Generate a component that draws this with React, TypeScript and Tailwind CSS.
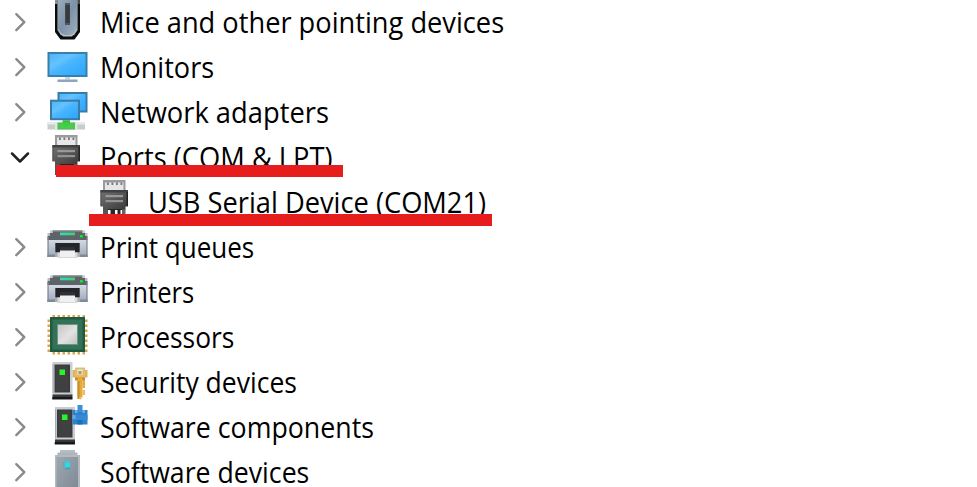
import type { ReactNode } from "react";

type Box = [number, number, number, number, string];

function Boxes({ items }: { items: Box[] }) {
  return (
    <>
      {items.map(([x, y, w, h, fill], i) => (
        <rect key={i} x={x} y={y} width={w} height={h} fill={fill} />
      ))}
    </>
  );
}

function Icon({ children }: { children: ReactNode }) {
  return (
    <svg viewBox="-0.5 0 41 40" className="block h-10 w-[41px] shrink-0 overflow-hidden">
      {children}
    </svg>
  );
}

function MouseIcon() {
  return (
    <Icon>
      <defs>
        <linearGradient id="mouse" x1="0" y1="0" x2="1" y2="1">
          <stop offset="0" stopColor="#9badbd" />
          <stop offset="0.5" stopColor="#7c92a8" />
          <stop offset="1" stopColor="#9fb0c0" />
        </linearGradient>
      </defs>
      <path d="M7.500 0H32.500V32L30 35.500L27 39.500H13L10 35.500L7.500 32Z" fill="#0c0c0c" />
      <Boxes
        items={[
          [7.5, 0, 2.5, 4, "#8c8c8c"],
          [30, 0, 2.5, 4, "#4a4a4a"],
        ]}
      />
      <path d="M10 0H30V30L27 34.500L24 36.500H16L13 34.500L10 30Z" fill="#b9c3cc" />
      <path d="M10.500 0H29.500V29L26 33.500L23 35H17L14 33.500L10.500 29Z" fill="url(#mouse)" />
      <rect x="17.500" y="3" width="5" height="22" fill="#505862" />
      <rect x="18" y="5" width="4.300" height="18" fill="#383a3d" />
    </Icon>
  );
}

function ScreenGradient({ id }: { id: string }) {
  return (
    <linearGradient id={id} x1="0" y1="0" x2="1" y2="1">
      <stop offset="0" stopColor="#4bb5fc" />
      <stop offset="0.32" stopColor="#66c2ff" />
      <stop offset="0.5" stopColor="#48b5ff" />
      <stop offset="1" stopColor="#2ba6fb" />
    </linearGradient>
  );
}

function MonitorIcon() {
  return (
    <Icon>
      <defs>
        <ScreenGradient id="screen" />
      </defs>
      <rect x="0" y="7" width="40" height="25" fill="#397fa6" />
      <rect x="2" y="9" width="36" height="21" fill="url(#screen)" />
      <rect x="17.500" y="32" width="5" height="2.500" fill="#cbd5e2" />
      <rect x="10" y="34.500" width="20" height="2.500" fill="#8fa4be" />
    </Icon>
  );
}

function NetworkIcon() {
  return (
    <Icon>
      <defs>
        <ScreenGradient id="netscreen" />
      </defs>
      <rect x="10" y="2" width="30" height="20.500" fill="#387ba5" />
      <rect x="12" y="4" width="26" height="16.500" fill="url(#netscreen)" />
      <rect x="2.500" y="9.700" width="30" height="20.500" fill="#387ba5" />
      <rect x="4.500" y="11.700" width="26" height="16.500" fill="url(#netscreen)" />
      <Boxes
        items={[
          [0, 32, 37.5, 7.5, "#c9cccd"],
          [0, 32, 37.5, 2.5, "#e9eaeb"],
          [7.5, 32, 2.5, 7.5, "#d8edd9"],
          [27.5, 32, 2.5, 7.5, "#d8edd9"],
          [15, 30.2, 7.5, 4.3, "#41b746"],
          [10, 32.5, 17.5, 7, "#55bd59"],
          [12.5, 35, 12.5, 3, "#3fd547"],
          [17.5, 32, 2.5, 5, "#37d141"],
        ]}
      />
    </Icon>
  );
}

function PortIcon({ id }: { id: string }) {
  return (
    <Icon>
      <defs>
        <linearGradient id={id} x1="0" y1="0" x2="1" y2="1">
          <stop offset="0" stopColor="#747474" />
          <stop offset="0.5" stopColor="#565656" />
          <stop offset="1" stopColor="#383838" />
        </linearGradient>
      </defs>
      <rect x="7.500" y="0" width="22.500" height="10.500" fill="#9b9b9b" />
      <rect x="9.500" y="2.500" width="18.500" height="8" fill="#e6e6e6" />
      <Boxes
        items={[
          [11.5, 2.5, 1.8, 2.5, "#777777"],
          [16, 2.5, 1.8, 2.5, "#777777"],
          [20.5, 2.5, 1.8, 2.5, "#777777"],
          [25, 2.5, 1.8, 2.5, "#777777"],
          [7.5, 29, 5, 11, "#555555"],
          [15, 29, 4.5, 11, "#292929"],
          [22, 29, 3, 11, "#292929"],
          [26.5, 29, 3.5, 11, "#666666"],
        ]}
      />
      <path d="M5 10H32.500V26.500H30V29.500H7.500V26.500H5Z" fill={`url(#${id})`} />
      <path d="M5 10H32.500V12.500H5Z" fill="#414141" />
      <Boxes
        items={[
          [5, 10, 1, 16, "#505050"],
          [31, 12, 1.5, 14, "#232323"],
          [10, 15, 17.5, 2.2, "#999999"],
          [10, 20, 17.5, 2.2, "#929292"],
          [12.5, 29, 14, 1, "#242424"],
        ]}
      />
    </Icon>
  );
}

function PrinterIcon({ id }: { id: string }) {
  return (
    <Icon>
      <defs>
        <linearGradient id={`${id}body`} x1="0" y1="0" x2="0" y2="1">
          <stop offset="0" stopColor="#d4dae3" />
          <stop offset="1" stopColor="#9ca8b8" />
        </linearGradient>
        <linearGradient id={`${id}light`} x1="0" y1="0" x2="1" y2="0">
          <stop offset="0" stopColor="#34d8c1" />
          <stop offset="1" stopColor="#43cf67" />
        </linearGradient>
      </defs>
      <path d="M5 5.500H35V8H37.500V11H40V15.500H0V11H2.500V8H5Z" fill="#5d6369" />
      <Boxes
        items={[
          [2.5, 5.5, 2.5, 2.5, "#c7c9cc"],
          [35, 5.5, 2.5, 2.5, "#c7c9cc"],
          [0, 8, 2.5, 3, "#b8bbc0"],
          [37.5, 8, 2.5, 3, "#b8bbc0"],
          [5, 5.5, 30, 1.2, "#888c91"],
        ]}
      />
      <rect x="12.500" y="7.500" width="15" height="2.800" fill={`url(#${id}light)`} />
      <rect x="0" y="15" width="40" height="17" fill={`url(#${id}body)`} />
      <Boxes
        items={[
          [0, 12, 1.2, 20, "#7e8998"],
          [38.8, 12, 1.2, 20, "#7e8998"],
          [0, 29.5, 40, 2.5, "#7f8997"],
          [32.5, 10, 2.8, 2.5, "#00f51b"],
          [7.5, 18, 25, 9.5, "#535559"],
          [8.5, 18, 23, 9.5, "#242528"],
          [12.5, 22, 15, 5, "#303134"],
          [7.5, 27.5, 25, 4.5, "#a8adb4"],
          [10, 27.5, 20, 5.5, "#d6d8da"],
          [12.5, 25.5, 15, 6.5, "#f0f0f0"],
        ]}
      />
    </Icon>
  );
}

const pins = [5, 10, 15, 20, 25, 30, 35];

function ProcessorIcon() {
  return (
    <Icon>
      <defs>
        <linearGradient id="die" x1="0" y1="0" x2="1" y2="1">
          <stop offset="0" stopColor="#c7c7c7" />
          <stop offset="0.55" stopColor="#e2e2e2" />
          <stop offset="1" stopColor="#c4c4c4" />
        </linearGradient>
      </defs>
      {pins.map((p) => (
        <g key={p} fill="#d7a54d">
          <rect x={p} y="0" width="2.500" height="39.500" />
          <rect x="0" y={p - 0.5} width="40" height="2.500" />
        </g>
      ))}
      <rect x="2.500" y="2" width="35" height="35" fill="#205a41" />
      <rect x="5" y="4.500" width="30" height="30" fill="#327358" />
      <rect x="9.500" y="9" width="21" height="21" fill="#6c9583" />
      <rect x="10.500" y="10" width="19" height="19" fill="url(#die)" />
    </Icon>
  );
}

function Tower({ x }: { x: number }) {
  return (
    <g transform={`translate(${x} 0)`}>
      <Boxes
        items={[
          [0, 2, 20, 33, "#c8ced5"],
          [0, 4, 1.2, 29, "#a6adb5"],
          [2, 4.5, 15.5, 28, "#3b3b3b"],
          [3.5, 6, 12, 25, "#404040"],
          [7, 9.5, 5.5, 5.5, "#27f52c"],
          [0, 34.5, 20, 2.5, "#38393b"],
          [-0.3, 37, 20.3, 2.5, "#17181a"],
        ]}
      />
    </g>
  );
}

function SecurityIcon() {
  return (
    <Icon>
      <Tower x={5} />
      <Boxes
        items={[
          [27.5, 7.5, 10, 2.5, "#d9bf86"],
          [25, 10, 15, 7.5, "#dcb363"],
          [27.5, 10, 10, 8, "#e8bd60"],
          [27.5, 17.5, 10, 3, "#b88b3c"],
          [30, 9.5, 5, 5, "#f0ead6"],
          [31, 11, 3, 3, "#9f9d79"],
          [30, 17.5, 5, 20, "#e8aa35"],
          [30, 21, 2, 18, "#c58b28"],
          [35, 20, 2.5, 8, "#dfab4a"],
          [35, 30, 2.5, 5, "#e6bd6d"],
          [32, 37.5, 2, 1.8, "#ddb56b"],
        ]}
      />
    </Icon>
  );
}

function ComponentIcon() {
  return (
    <Icon>
      <Tower x={7.5} />
      <Boxes
        items={[
          [25, 5, 15, 14.5, "#2b83ce"],
          [25, 10, 15, 5, "#348bd4"],
          [30, 0, 5, 7, "#3a91da"],
          [25, 10, 3, 4, "#69a9dd"],
          [30, 15, 5, 4.5, "#1f6eb9"],
          [27.5, 5, 2.5, 3, "#6eace0"],
          [35, 5, 2.5, 3, "#6eace0"],
        ]}
      />
    </Icon>
  );
}

function SoftwareIcon() {
  return (
    <Icon>
      <defs>
        <linearGradient id="case" x1="0" y1="0" x2="1" y2="1">
          <stop offset="0" stopColor="#9ca7b1" />
          <stop offset="1" stopColor="#7e8994" />
        </linearGradient>
      </defs>
      <Boxes
        items={[
          [12.5, 0, 15, 5, "#b7bdc4"],
          [10, 2.5, 20, 3, "#aeb5bc"],
          [7.5, 5, 25, 35, "#b3bac1"],
        ]}
      />
      <rect x="9" y="7" width="21.500" height="33" fill="url(#case)" />
      <Boxes
        items={[
          [15, 12, 2.5, 5, "#6da7b2"],
          [17.5, 10, 5, 2.5, "#70aeb9"],
          [17.5, 17, 5, 2.5, "#599ca8"],
          [17.5, 12.5, 5, 4.8, "#25ddeb"],
        ]}
      />
    </Icon>
  );
}

type Node = {
  label: string;
  text: string;
  icon: ReactNode;
  open?: boolean;
  child?: boolean;
};

const nodes: Node[] = [
  { label: "Mice and other pointing devices", text: "scale-x-[0.939]", icon: <MouseIcon /> },
  { label: "Monitors", text: "scale-x-[0.935]", icon: <MonitorIcon /> },
  { label: "Network adapters", text: "scale-x-[0.942]", icon: <NetworkIcon /> },
  { label: "Ports (COM & LPT)", text: "scale-x-[0.941]", icon: <PortIcon id="port" />, open: true },
  { label: "USB Serial Device (COM21)", text: "scale-x-[0.94]", icon: <PortIcon id="usb" />, child: true },
  { label: "Print queues", text: "scale-x-[0.897]", icon: <PrinterIcon id="queue" /> },
  { label: "Printers", text: "scale-x-[0.883]", icon: <PrinterIcon id="printer" /> },
  { label: "Processors", text: "scale-x-[0.91]", icon: <ProcessorIcon /> },
  { label: "Security devices", text: "scale-x-[0.915]", icon: <SecurityIcon /> },
  { label: "Software components", text: "scale-x-[0.922]", icon: <ComponentIcon /> },
  { label: "Software devices", text: "scale-x-[0.92]", icon: <SoftwareIcon /> },
];

function Chevron({ open }: { open?: boolean }) {
  return (
    <svg viewBox="0 0 40 45" className="h-[45px] w-10 shrink-0" fill="none" strokeLinecap="round" strokeLinejoin="round">
      {open ? (
        <path d="M12 18.500L20 26.500L28 18.500" stroke="#222222" strokeWidth="2.500" />
      ) : (
        <path d="M16.300 14.200L24.300 22.200L16.300 30.200" stroke="#8a8a8a" strokeWidth="2.400" />
      )}
    </svg>
  );
}

export default function App() {
  return (
    <main className="relative h-[487px] w-[977px] overflow-hidden bg-white text-black">
      <ul className="flex flex-col">
        {nodes.map((node) => (
          <li key={node.label} className={node.child ? "flex h-[45px] shrink-0 pl-[95px]" : "flex h-[45px] shrink-0"}>
            {!node.child && (
              <span className="flex w-[47px]">
                <Chevron open={node.open} />
              </span>
            )}
            {node.icon}
            <span
              className={`ml-3 origin-left whitespace-nowrap font-['Open_Sans','Noto_Sans',sans-serif] text-[29px] font-[370] leading-[43px] ${node.text}`}
            >
              {node.label}
            </span>
          </li>
        ))}
      </ul>
      <div className="absolute left-[56px] top-[165px] h-3 w-[287px] bg-[#e71c1c]" />
      <div className="absolute left-[89px] top-[214px] h-3 w-[403px] bg-[#e71c1c]" />
    </main>
  );
}
